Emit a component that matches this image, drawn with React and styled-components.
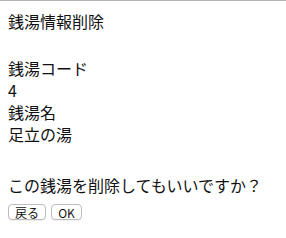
import React from "react";
import styled, { createGlobalStyle } from "styled-components";

const GlobalStyle = createGlobalStyle`
  html, body {
    margin: 0;
    padding: 0;
    background: #ffffff;
  }
  body {
    border-top: 1px solid #b3b3b3;
    padding: 9px 8px 8px;
    font-family: "Noto Sans CJK JP", "Noto Sans", sans-serif;
    font-size: 16px;
    line-height: 22px;
    color: #111;
  }
`;

const Title = styled.div`
  margin-bottom: 25px;
`;

const Detail = styled.div`
  display: flex;
  flex-direction: column;
  margin-bottom: 29px;
`;

const Line = styled.div``;

const Actions = styled.div`
  display: flex;
  gap: 5px;
  margin-top: 8px;
`;

const Button = styled.button`
  font-family: "Noto Sans CJK JP", "Noto Sans", sans-serif;
  font-size: 12px;
  line-height: 13px;
  height: 16px;
  min-width: ${(props) => props.width || 32}px;
  padding: 0 6px;
  background: #fff;
  color: #111;
  border: 1px solid #bdbdbd;
  border-radius: 4px;
  box-shadow: 0 1px 0 rgba(0, 0, 0, 0.06);
`;

const App = () => {
  return (
    <>
      <GlobalStyle />
      <Title>銭湯情報削除</Title>
      <Detail>
        <Line>銭湯コード</Line>
        <Line>4</Line>
        <Line>銭湯名</Line>
        <Line>足立の湯</Line>
      </Detail>
      <Line>この銭湯を削除してもいいですか？</Line>
      <Actions>
        <Button width={36}>戻る</Button>
        <Button width={31}>OK</Button>
      </Actions>
    </>
  );
};

export default App;
